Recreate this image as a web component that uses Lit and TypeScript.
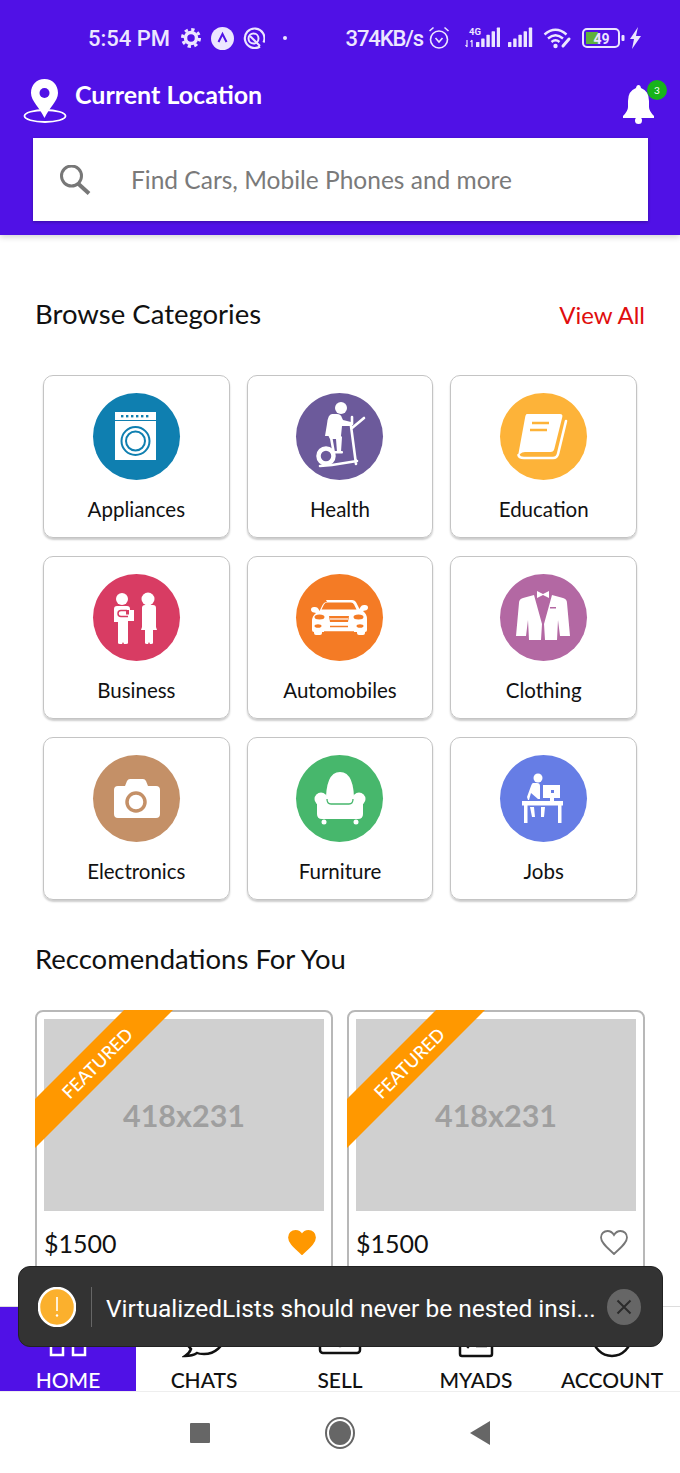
import { LitElement, css, html, svg } from "lit";
import { customElement } from "lit/decorators.js";

const bars = (x: number, base: number) =>
  [0, 1, 2, 3, 4].map(
    (i) => svg`<rect x=${x + i * 5.2} y=${base - 5 - i * 3.6} width="3.4" height=${5 + i * 3.6} rx="0.6" />`
  );

const categoryIcons: Record<string, unknown> = {
  Appliances: svg`
    <rect x="22" y="19" width="41" height="8" fill="#fff" />
    ${[0, 1, 2, 3, 4, 5].map((i) => svg`<rect x=${28 + i * 5} y="22" width="2.4" height="2.4" fill="var(--c)" />`)}
    <rect x="22" y="28" width="41" height="39" fill="#fff" />
    <circle cx="42.5" cy="48" r="14" fill="none" stroke="var(--c)" stroke-width="2" />
    <circle cx="42.5" cy="48" r="9.5" fill="none" stroke="var(--c)" stroke-width="2" />`,
  Health: svg`
    <circle cx="45" cy="15" r="6" fill="#fff" />
    <path d="M36 21h5q4 0 5 4l1 2 8 2v4h-9l-1 10H29l2-12q1-10 5-10z" fill="#fff" />
    <path d="M32 42h12l2 2-1 15h-4l-1-13h-6z" fill="#fff" />
    <rect x="38" y="58" width="9" height="2.600" rx="1" fill="#fff" />
    <path d="M55 33l5 38M68 25L56 35M56 24v7M35 44l3 17M24 73l12-1 25-4" stroke="#fff" stroke-width="2.600" fill="none" stroke-linecap="round" />
    <circle cx="30" cy="63" r="7.500" fill="none" stroke="#fff" stroke-width="4.500" />`,
  Education: svg`
    <path d="M27 21h33q3 0 2.300 3l-8 32q-.7 3-3.700 3H25q-3 0-5 2l-2 2 7-38q.6-4 2-4z" fill="#fff" />
    <path d="M66 28l-8 33q-1 4-5 4H24q-5 0-5.500-3" fill="none" stroke="#fff" stroke-width="2.600" stroke-linecap="round" />
    <path d="M32 30h17M30 37h17" stroke="var(--c)" stroke-width="2.600" />`,
  Business: svg`
    <circle cx="29" cy="25" r="6" fill="#fff" />
    <circle cx="55" cy="25" r="6.500" fill="#fff" />
    <path d="M24 32h10q3 0 3 3v1h4v11h-6v22q0 1-2 1h-2l-1-2-1 2h-2q-2 0-2-1V48h-4V35q0-3 3-3z" fill="#fff" />
    <path d="M34 36.500h-6q-3 0-3 3t3 3h7" fill="none" stroke="var(--c)" stroke-width="1.500" />
    <rect x="33" y="36" width="3" height="4.500" fill="var(--c)" />
    <path d="M50 31h10q3 0 3 3v19l1 3h-4v13q0 1-2 1h-1l-1-2-1 2h-1q-2 0-2-1V56h-4l1-3V34q0-3 3-3z" fill="#fff" />`,
  Automobiles: svg`
    <path d="M30 26h26q3 0 4.500 3l3 6 1-2q1-2 3.500-2h1q3 0 3 2.500t-3 3l-2 .5q4 3 4 8v11q0 2-2 2v1q0 2-2 2h-4q-2 0-2-2v-1H26v1q0 2-2 2h-4q-2 0-2-2v-1q-2 0-2-2V47q0-5 4-8l-2-.5q-3-.5-3-3t3-2.500h1q2.500 0 3.500 2l1 2 3-6q1.500-3 4.500-3z" fill="#fff" />
    <path d="M31 28.500h24q2 0 3 2l2.500 5h-35l2.500-5q1-2 3-2z" fill="var(--c)" />
    <ellipse cx="23.500" cy="43" rx="5" ry="2.500" fill="var(--c)" />
    <ellipse cx="62.500" cy="43" rx="5" ry="2.500" fill="var(--c)" />
    <ellipse cx="22" cy="52" rx="3.500" ry="1.800" fill="var(--c)" />
    <ellipse cx="64" cy="52" rx="3.500" ry="1.800" fill="var(--c)" />
    <path d="M33 42h20l-1 6H34z" fill="var(--c)" />
    <path d="M34 45h18" stroke="#fff" stroke-width="1.200" />
    <path d="M34 52.500h18M28 58h30" stroke="var(--c)" stroke-width="1.500" />`,
  Clothing: svg`
    <path d="M34 21L23 24Q19 25 19 29L16 62L26 62L28 46L29 66L41 66L42 50Z" fill="#fff" />
    <path d="M52 21L63 24Q67 25 67 29L70 62L60 62L58 46L57 66L45 66L44 50Z" fill="#fff" />
    <path d="M37 17l6 3 6-3v7l-6-3-6 3z" fill="#fff" />
    <rect x="50" y="33" width="6" height="1.500" fill="var(--c)" />`,
  Electronics: svg`
    <path d="M25 31h7l2-5q1-2 3-2h13q2 0 3 2l2 5h8q4 0 4 4v24q0 4-4 4H25q-4 0-4-4V35q0-4 4-4z" fill="#fff" />
    <circle cx="43" cy="47" r="9" fill="none" stroke="var(--c)" stroke-width="3.500" />`,
  Furniture: svg`
    <path d="M30 50Q29 17 44 17Q59 17 58 50Z" fill="#fff" />
    <circle cx="25" cy="44" r="6.500" fill="#fff" />
    <circle cx="63" cy="44" r="6.500" fill="#fff" />
    <path d="M21 46h10v4h26v-4h10v13q0 5-5 5H26q-5 0-5-5z" fill="#fff" />
    <path d="M31 44q0 5 4 5h18q4 0 4-5" fill="none" stroke="var(--c)" stroke-width="1.300" />
    <circle cx="28" cy="67" r="2.500" fill="#fff" />
    <circle cx="60" cy="67" r="2.500" fill="#fff" />`,
  Jobs: svg`
    <circle cx="38" cy="23" r="4.500" fill="#fff" />
    <path d="M33 28h4q3 0 3 3v13h-2l-7-6-2 7h-1l-1-3 4-11q1-3 2-3z" fill="#fff" />
    <rect x="43" y="30" width="17" height="13" fill="#fff" />
    <rect x="51" y="35" width="3" height="3" fill="var(--c)" />
    <rect x="50" y="43" width="4" height="3" fill="#fff" />
    <rect x="22" y="46" width="41" height="4.500" fill="#fff" />
    <rect x="24" y="50" width="3.500" height="18" fill="#fff" />
    <rect x="58" y="50" width="3.500" height="18" fill="#fff" />
    <path d="M30 52h4l1 10h-3zM41 52h4l-1 10h-3z" fill="#fff" />`,
};

const categories = [
  { name: "Appliances", color: "#0f7fb0" },
  { name: "Health", color: "#6c5a9b" },
  { name: "Education", color: "#fdb339" },
  { name: "Business", color: "#d83c63" },
  { name: "Automobiles", color: "#f47b25" },
  { name: "Clothing", color: "#b368a3" },
  { name: "Electronics", color: "#c49067" },
  { name: "Furniture", color: "#47b76c" },
  { name: "Jobs", color: "#667de5" },
];

const tabs = [
  {
    label: "HOME",
    icon: svg`<rect x="5" y="5" width="12" height="15" /><rect x="27" y="5" width="12" height="15" /><rect x="5" y="27" width="12" height="14" /><rect x="27" y="27" width="12" height="14" />`,
  },
  {
    label: "CHATS",
    icon: svg`<path d="M22 4C11 4 3 12 3 22c0 6 3 10 6 13-1 3-3 5-6 7 4 0 9-1 12-3 2 1 5 1 7 1 11 0 20-8 20-18S33 4 22 4z" />`,
  },
  {
    label: "SELL",
    icon: svg`<rect x="2" y="12" width="40" height="27" rx="3" /><circle cx="22" cy="29" r="3" fill="currentColor" />`,
  },
  {
    label: "MYADS",
    icon: svg`<rect x="6" y="8" width="32" height="34" rx="2" /><path d="M11 30l3 3 5-6M22 32h11" />`,
  },
  {
    label: "ACCOUNT",
    icon: svg`<circle cx="22" cy="23" r="19" /><circle cx="22" cy="15" r="6" />`,
  },
];

@customElement("app-root")
export class AppRoot extends LitElement {
  static styles = css`
    :host {
      display: block;
      width: 680px;
      height: 1473px;
      font-family: Lato, "Noto Sans", sans-serif;
      color: #111;
    }
    .page {
      position: relative;
      height: 1473px;
      display: flex;
      flex-direction: column;
      overflow: hidden;
      background: #fff;
    }
    header {
      height: 235px;
      flex: none;
      box-sizing: border-box;
      background: #5011e6;
      box-shadow: 0 2px 6px rgba(0, 0, 0, 0.18);
      z-index: 1;
    }
    .status {
      height: 76px;
      display: flex;
      justify-content: space-between;
      align-items: center;
      padding: 0 38px 0 88px;
      color: #ece6ff;
      font-family: Roboto, sans-serif;
      font-weight: 500;
      font-size: 22px;
    }
    .status div {
      display: flex;
      align-items: center;
    }
    .status svg {
      display: block;
      fill: #ece6ff;
    }
    .speed {
      letter-spacing: -1.1px;
    }
    .location {
      height: 46px;
      margin-top: 2px;
      padding: 0 23px;
      display: flex;
      align-items: flex-start;
      color: #fff;
    }
    .location h1 {
      margin: 0 0 0 8px;
      font-size: 25px;
      font-weight: 700;
      line-height: 32px;
      flex: 1;
    }
    .bell {
      position: relative;
      width: 33px;
      height: 39px;
      margin: 7px 2px 0 0;
    }
    .badge {
      position: absolute;
      left: 25px;
      top: -5px;
      width: 20px;
      height: 20px;
      border-radius: 50%;
      background: #17b31a;
      font-size: 10px;
      line-height: 20px;
      text-align: center;
      color: #fff;
    }
    .search {
      height: 83px;
      margin: 14px 32px 0 33px;
      display: flex;
      align-items: center;
      background: #fff;
      box-shadow: 0 1px 3px rgba(0, 0, 0, 0.3);
      padding-left: 26px;
      font-size: 24.5px;
      color: #7a7a7a;
    }
    .search span {
      margin-left: 40px;
    }
    main {
      flex: 1;
      overflow: hidden;
    }
    .head {
      height: 40px;
      display: flex;
      justify-content: space-between;
      align-items: center;
      padding: 0 35px;
    }
    .head h2 {
      margin: 0;
      font-size: 27.5px;
      font-weight: 400;
      color: #111;
    }
    .head a {
      font-size: 24px;
      color: #e00d0d;
      padding-top: 3px;
    }
    .browse {
      margin-top: 58px;
    }
    .recs {
      margin-top: 38px;
    }
    .grid {
      width: 594px;
      margin: 42px 0 0 43px;
      display: grid;
      grid-template-columns: repeat(3, 1fr);
      grid-auto-rows: 163px;
      column-gap: 17px;
      row-gap: 18px;
    }
    .cat {
      box-sizing: border-box;
      border: 1px solid #c4c4c4;
      border-radius: 10px;
      box-shadow: 0 2px 2px rgba(0, 0, 0, 0.2);
      display: flex;
      flex-direction: column;
      align-items: center;
      padding-top: 17px;
    }
    .disc {
      width: 87px;
      height: 87px;
      border-radius: 50%;
      background: var(--c);
    }
    .disc svg {
      display: block;
    }
    .cat span {
      margin-top: 16px;
      font-size: 20.5px;
      line-height: 26px;
      color: #111;
    }
    .products {
      width: 610px;
      margin: 32px 0 0 35px;
      display: grid;
      grid-template-columns: 1fr 1fr;
      column-gap: 14px;
    }
    .product {
      position: relative;
      box-sizing: border-box;
      height: 340px;
      padding: 7px;
      border: 2px solid #b8b8b8;
      border-radius: 8px;
    }
    .thumb {
      height: 192px;
      display: flex;
      align-items: center;
      justify-content: center;
      background: #d0d0d0;
      color: #9f9f9f;
      font-size: 30.5px;
      font-weight: 700;
      padding-bottom: 1px;
      box-sizing: border-box;
    }
    .ribbon {
      position: absolute;
      left: -2px;
      top: -2px;
      width: 138px;
      height: 138px;
      background: #ff9800;
      clip-path: polygon(89px 0, 138px 0, 0 138px, 0 89px);
    }
    .ribbon span {
      position: absolute;
      left: 62px;
      top: 53px;
      transform: translate(-50%, -50%) rotate(-45deg);
      color: #fff;
      font-size: 18px;
      font-weight: 500;
      white-space: nowrap;
    }
    .price {
      margin-top: 18px;
      height: 25px;
      padding: 1px 8px 0 0;
      display: flex;
      justify-content: space-between;
      align-items: center;
      font-size: 25px;
      color: #111;
    }
    .tabs {
      flex: none;
      height: 85px;
      box-sizing: border-box;
      border-top: 1px solid #ddd;
      display: grid;
      grid-template-columns: repeat(5, 136px);
      background: #fff;
    }
    .tab {
      display: flex;
      flex-direction: column;
      align-items: center;
      justify-content: flex-end;
      font-size: 21px;
      font-weight: 500;
      line-height: 22px;
      color: #111;
      white-space: nowrap;
    }
    .tab svg {
      margin-bottom: 11px;
      fill: none;
      stroke: currentColor;
      stroke-width: 2.5;
    }
    .tab.active {
      background: #5011e6;
      color: #fff;
    }
    .nav {
      flex: none;
      height: 82px;
      box-sizing: border-box;
      border-top: 1px solid #eee;
      display: flex;
      justify-content: center;
      align-items: center;
      gap: 115px;
      background: #fff;
    }
    .toast {
      position: absolute;
      left: 18px;
      top: 1266px;
      width: 645px;
      height: 81px;
      box-sizing: border-box;
      padding: 0 21px 0 19px;
      display: flex;
      align-items: center;
      background: #333;
      border: 1px solid #222;
      border-radius: 12px;
      color: #fff;
      font-family: Roboto, sans-serif;
      font-size: 24.5px;
      z-index: 2;
    }
    .toast .sep {
      flex: none;
      width: 1px;
      height: 40px;
      margin: 0 14px 0 15px;
      background: #666;
    }
    .toast .msg {
      flex: 1;
      min-width: 0;
      padding-top: 3px;
      white-space: nowrap;
    }
    .toast svg {
      flex: none;
      display: block;
    }
  `;

  private heart(filled: boolean) {
    return html`<svg width="28" height="25" viewBox="0 0 28 25">
      <path
        d="M14 24C8 18 1 13 1 7.500C1 3.500 4 1 7.500 1C10 1 12.500 2.500 14 5C15.500 2.500 18 1 20.500 1C24 1 27 3.500 27 7.500C27 13 20 18 14 24Z"
        fill=${filled ? "#ff9800" : "none"}
        stroke=${filled ? "#ff9800" : "#777"}
        stroke-width="1.800"
      />
    </svg>`;
  }

  private product(filled: boolean) {
    return html`<div class="product">
      <div class="thumb">418x231</div>
      <div class="ribbon"><span>FEATURED</span></div>
      <div class="price"><span>$1500</span>${this.heart(filled)}</div>
    </div>`;
  }

  render() {
    return html`
      <div class="page">
        <header>
          <div class="status">
            <div>
              <span>5:54 PM</span>
              <svg style="margin-left:11px" width="20" height="20" viewBox="0 0 20 20">
                <circle cx="10" cy="10" r="8.500" fill="none" stroke="#ece6ff" stroke-width="3" stroke-dasharray="3.300 3.370" />
                <circle cx="10" cy="10" r="5.500" fill="none" stroke="#ece6ff" stroke-width="3.500" />
              </svg>
              <svg style="margin-left:10px" width="23" height="23" viewBox="0 0 23 23">
                <circle cx="11.500" cy="11.500" r="11.500" />
                <path d="M7.500 15l4-8 4 8" fill="none" stroke="#5011e6" stroke-width="2" />
              </svg>
              <svg style="margin-left:9px" width="22" height="22" viewBox="0 0 22 22">
                <g fill="none" stroke="#ece6ff">
                  <path d="M17 19.500a9.800 9.800 0 1 1 3.500-4" stroke-width="2.200" />
                  <circle cx="10.500" cy="11.500" r="5" stroke-width="2" />
                  <path d="M7 9l10 10" stroke-width="2" />
                </g>
              </svg>
              <svg style="margin-left:18px" width="4" height="4" viewBox="0 0 4 4"><circle cx="2" cy="2" r="2" /></svg>
            </div>
            <div>
              <span class="speed">374KB/s</span>
              <svg style="margin-left:5px" width="22" height="24" viewBox="0 0 22 24">
                <g fill="none" stroke="#ece6ff" stroke-width="1.600">
                  <circle cx="11" cy="13.500" r="8.500" />
                  <path d="M7.500 12l3.500 4 3.500-4M1.500 5l4-3.500M20.500 5l-4-3.500" />
                </g>
              </svg>
              <svg style="margin-left:14px" width="36" height="24" viewBox="0 0 36 24">
                <text x="5" y="9" font-size="9.500" font-family="Roboto, sans-serif" font-weight="700" fill="#ece6ff">4G</text>
                <path d="M3 14v7M1.500 19l1.500 2M8 21v-7M6.500 16l1.500-2" stroke="#ece6ff" stroke-width="1.200" fill="none" />
                ${bars(12, 21)}
              </svg>
              <svg style="margin-left:7px" width="26" height="24" viewBox="0 0 26 24">${bars(1, 21)}</svg>
              <svg style="margin-left:10px" width="29" height="22" viewBox="0 0 29 22">
                <g fill="none" stroke="#ece6ff" stroke-width="2.400">
                  <path d="M1.500 7.500q11-9.500 22 0M5 11.500q7.500-6.500 15 0M8.500 15q4-3.500 8 0" />
                  <path d="M20 19l6-7" stroke-width="3" stroke-linecap="round" />
                </g>
                <circle cx="12.500" cy="19" r="2.200" />
              </svg>
              <svg style="margin-left:10px" width="43" height="20" viewBox="0 0 43 20">
                <rect x="1" y="1" width="36" height="18" rx="4" fill="none" stroke="#ece6ff" stroke-width="2" />
                <rect x="4" y="4" width="12" height="12" fill="#5fb13c" />
                <rect x="39.500" y="7" width="3" height="6" rx="1" />
                <text x="19.500" y="15.500" text-anchor="middle" font-size="14" font-family="Roboto, sans-serif" font-weight="700" fill="#ece6ff">49</text>
              </svg>
              <svg style="margin-left:4px" width="13" height="22" viewBox="0 0 13 22">
                <path d="M9 0L1 12h4l-2 10 9-13H7z" />
              </svg>
            </div>
          </div>
          <div class="location">
            <svg width="44" height="46" viewBox="0 0 44 46">
              <ellipse cx="22" cy="38" rx="20.500" ry="6" fill="none" stroke="#fff" stroke-width="1.800" />
              <path d="M21.500 1C13.500 1 8 7 8 15c0 8 9 15 13.500 25C26 30 35 23 35 15 35 7 29.500 1 21.500 1z" fill="#fff" />
              <circle cx="21.500" cy="15" r="5" fill="#5011e6" />
            </svg>
            <h1>Current Location</h1>
            <div class="bell">
              <svg width="33" height="39" viewBox="0 0 33 39">
                <path d="M16.500 0q2 0 2.500 3q8 3 8 13v6q0 4 5 9v2H1v-2q5-5 5-9v-6q0-10 8-13q.5-3 2.500-3z" fill="#fff" />
                <circle cx="16.500" cy="35.500" r="3.500" fill="#fff" />
              </svg>
              <span class="badge">3</span>
            </div>
          </div>
          <div class="search">
            <svg width="32" height="30" viewBox="0 0 32 30">
              <circle cx="12.500" cy="11" r="10" fill="none" stroke="#777" stroke-width="3" />
              <path d="M19 18.500l11 10" stroke="#777" stroke-width="4" />
            </svg>
            <span>Find Cars, Mobile Phones and more</span>
          </div>
        </header>

        <main>
          <div class="head browse">
            <h2>Browse Categories</h2>
            <a>View All</a>
          </div>
          <div class="grid">
            ${categories.map(
              (c) => html`<div class="cat">
                <div class="disc" style="--c:${c.color}">
                  <svg width="87" height="87" viewBox="0 0 87 87">${categoryIcons[c.name]}</svg>
                </div>
                <span>${c.name}</span>
              </div>`
            )}
          </div>
          <div class="head recs"><h2>Reccomendations For You</h2></div>
          <div class="products">${this.product(true)}${this.product(false)}</div>
        </main>

        <div class="tabs">
          ${tabs.map(
            (t, i) => html`<div class="tab ${i === 0 ? "active" : ""}">
              <svg width="44" height="44" viewBox="0 0 44 44">${t.icon}</svg>
              <span>${t.label}</span>
            </div>`
          )}
        </div>

        <div class="nav">
          <svg width="20" height="20" viewBox="0 0 20 20"><rect width="20" height="20" rx="1" fill="#666" /></svg>
          <svg width="30" height="32" viewBox="0 0 30 32">
            <ellipse cx="15" cy="16" rx="14" ry="15" fill="none" stroke="#666" stroke-width="2" />
            <ellipse cx="15" cy="16" rx="11" ry="12" fill="#666" />
          </svg>
          <svg width="20" height="24" viewBox="0 0 20 24"><path d="M20 0v24L0 12z" fill="#666" /></svg>
        </div>

        <div class="toast">
          <svg width="38" height="40" viewBox="0 0 38 40">
            <ellipse cx="19" cy="20" rx="18" ry="19" fill="#fbb02d" stroke="#fff" stroke-width="2.500" />
            <path d="M19 10v14" stroke="#fff" stroke-width="1.600" />
            <circle cx="19" cy="28.500" r="1.200" fill="#fff" />
          </svg>
          <span class="sep"></span>
          <span class="msg">VirtualizedLists should never be nested insi...</span>
          <svg width="34" height="36" viewBox="0 0 34 36">
            <ellipse cx="17" cy="18" rx="17" ry="18" fill="#666" />
            <path d="M10.500 11.500l13 13M23.500 11.500l-13 13" stroke="#2b2b2b" stroke-width="2" />
          </svg>
        </div>
      </div>
    `;
  }
}

declare global {
  interface HTMLElementTagNameMap {
    "app-root": AppRoot;
  }
}
